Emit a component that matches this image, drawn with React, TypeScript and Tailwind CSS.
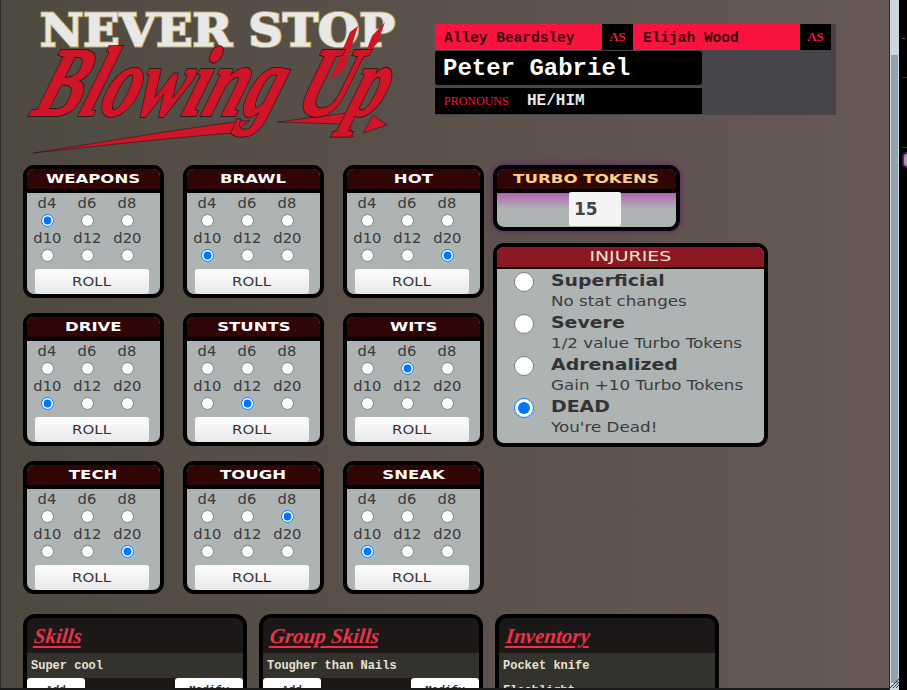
const wide = "font-['DejaVu_Sans',sans-serif]";
const typewriter = "font-['Liberation_Mono',monospace]";

const dice = ["d4", "d6", "d8", "d10", "d12", "d20"];

function DieCell({ label, name, checked }: { label: string; name: string; checked: boolean }) {
  return (
    <label className="flex flex-col items-center w-10 h-[35px]">
      <span className="text-[14px] leading-[17px] text-[#3a3a3a] font-medium scale-x-105">{label}</span>
      <input type="radio" name={name} defaultChecked={checked} className="w-[13px] h-[13px] m-0 mt-[2px]" />
    </label>
  );
}

function StatCard({ title, selected }: { title: string; selected: string }) {
  return (
    <div className="w-[141px] h-[133px] border-4 border-black rounded-[11px] overflow-hidden bg-[#aeb4b4] flex flex-col">
      <div className="h-6 shrink-0 bg-[#2f0506] border-b-4 border-black text-center text-white text-[13px] leading-[19px] font-bold">
        <span className="inline-block scale-x-[1.27]">{title}</span>
      </div>
      <div className="grid grid-cols-3 w-[120px] pt-[2px]">
        {dice.map((d) => (
          <DieCell key={d} label={d} name={title} checked={d === selected} />
        ))}
      </div>
      <button className="mt-[4px] ml-2 w-[114px] h-[25px] rounded-[3px] bg-gradient-to-b from-white to-[#e8e8e8] text-[#333] text-[12px] font-normal">
        <span className="inline-block scale-x-[1.25]">ROLL</span>
      </button>
    </div>
  );
}

function Injury({ title, note, checked }: { title: string; note: string; checked?: boolean }) {
  return (
    <div className="flex h-[42px]">
      <div className="w-[54px] flex justify-center items-start pt-[1px]">
        <input type="radio" name="injury" defaultChecked={checked} className="w-5 h-5 m-0" />
      </div>
      <div>
        <div className="text-[15px] leading-[20px] font-bold text-[#333] scale-x-[1.26] origin-left">{title}</div>
        <div className="text-[13.5px] leading-[21px] text-[#3c3c3c] scale-x-[1.24] origin-left">{note}</div>
      </div>
    </div>
  );
}

function ListPanel({ title, rows, withButtons }: { title: string; rows: string[]; withButtons?: boolean }) {
  return (
    <div className="w-[224px] h-[90px] shrink-0 border-4 border-b-0 border-black rounded-t-[12px] overflow-hidden bg-[#1c1818]">
      <div className="h-[35px] pl-[7px] pt-[4px]">
        <span className="inline-block -skew-x-6 text-[#e63347] text-[21px] leading-[28px] italic font-bold font-['Liberation_Serif',serif] underline decoration-2 underline-offset-3">{title}</span>
      </div>
      <div className={`${typewriter} text-[#e8e2d4] text-[12px] font-bold`}>
        <div className="h-[25px] bg-[#33322d] px-[4px] leading-[27px]">{rows[0]}</div>
        {withButtons ? (
          <div className="flex justify-between">
            <button className="w-[58px] h-6 bg-white rounded-t-[3px] text-[#333] text-[11px]">Add</button>
            <button className="w-[68px] h-6 bg-white rounded-t-[3px] text-[#333] text-[11px]">Modify</button>
          </div>
        ) : (
          <div className="bg-[#33322d] px-[4px] leading-[27px]">{rows[1]}</div>
        )}
      </div>
    </div>
  );
}

function Logo() {
  return (
    <svg width="400" height="160" viewBox="0 0 400 160" className="block overflow-visible">
      <text x="40" y="45.5" fontFamily="'DejaVu Serif', serif" fontWeight="700" fontSize="45" fill="#e6e6e6" stroke="#b59f55" strokeWidth="3" textLength="355" lengthAdjust="spacingAndGlyphs">NEVER STOP</text>
      <text x="40" y="45.5" fontFamily="'DejaVu Serif', serif" fontWeight="700" fontSize="45" fill="#e8e8e8" stroke="#e8e8e8" strokeWidth="1.2" textLength="355" lengthAdjust="spacingAndGlyphs">NEVER STOP</text>
      <path d="M33 153 C100 143 170 130 250 120 L233 133 C170 138 107 145 33 153Z" fill="#cf1528" stroke="#1a1010" strokeWidth="0.5" />
      <path d="M277 122 L347 113 L353 137 L344 128 L340 124Z M373 115 L387 125 L363 133Z" fill="#cf1528" stroke="#1a1010" strokeWidth="0.5" />
      <path d="M330 80 L350 32 L358 26 L344 70Z M362 62 L372 36 L385 22 L378 42Z" fill="#cf1528" />
      <g transform="translate(30 115) skewX(-20)">
        <text x="0" y="0" fontFamily="'Liberation Serif', serif" fontStyle="italic" fontWeight="700" fontSize="98" fill="#cf1528" stroke="#1a1010" strokeWidth="3.5" textLength="350" lengthAdjust="spacingAndGlyphs">Blowing Up</text>
        <text x="0" y="0" fontFamily="'Liberation Serif', serif" fontStyle="italic" fontWeight="700" fontSize="98" fill="#cf1528" stroke="#cf1528" strokeWidth="2" textLength="350" lengthAdjust="spacingAndGlyphs">Blowing Up</text>
      </g>
    </svg>
  );
}

function Scrollbar() {
  return (
    <div className="w-[18px] shrink-0 flex bg-black relative">
      <div className="w-[1px] bg-[#2a2a2a]" />
      <div className="w-[9px] h-full bg-[#cdd6dc] pt-[55px] px-[1px] relative">
        <div className="h-[628px] bg-[#90a4ae]" />
        <svg width="9" height="9" className="absolute right-0 bottom-[2px]" viewBox="0 0 9 9">
          <path d="M0 9L9 0M3 9L9 3M6 9L9 6" stroke="#333" strokeWidth="1" />
        </svg>
      </div>
      <div className="absolute left-[13px] top-[38px] w-[3px] h-[1px] bg-[#666]" />
      <div className="absolute left-[13px] top-[77px] w-[5px] h-[1px] bg-[#333]" />
      <div className="absolute left-[13px] top-[147px] w-[5px] h-[1px] bg-[#333]" />
      <div className="absolute left-[13px] top-[152px] w-[5px] h-[16px] rounded-l-full bg-[#999] border-2 border-r-0 border-[#5a1a70]" />
    </div>
  );
}

export default function App() {
  return (
    <div className={`w-[907px] h-[690px] flex overflow-hidden bg-[#1a1a1a] ${wide}`}>
      <div className="w-[889px] h-[688px] overflow-hidden bg-gradient-to-r from-[#4e4a40] to-[#675856] border-l border-[#2c2c2c]">
        <div className="flex h-[165px]">
          <div className="w-[435px] -ml-px">
            <Logo />
          </div>
          <div className="mt-6 w-[401px] h-[91px] bg-[#47444a]">
            <div className="flex h-[26px] w-[396px]">
              <div className={`w-[167px] bg-[#f8143f] pl-[9px] leading-[28px] text-[14.5px] font-bold text-[#3a0a10] ${typewriter}`}>Alley Beardsley</div>
              <div className="w-[31px] bg-black text-[#f8143f] text-[13px] leading-[26px] font-bold text-center font-['Liberation_Serif',serif]">AS</div>
              <div className={`w-[167px] bg-[#f8143f] pl-[10px] leading-[28px] text-[14.5px] font-bold text-[#3a0a10] ${typewriter}`}>Elijah Wood</div>
              <div className="w-[31px] bg-black text-[#f8143f] text-[13px] leading-[26px] font-bold text-center font-['Liberation_Serif',serif]">AS</div>
            </div>
            <div className={`mt-[1px] w-[267px] h-[34px] bg-black rounded-[3px] pl-[8px] text-white text-[24px] leading-[36px] font-bold ${typewriter}`}>Peter Gabriel</div>
            <div className="mt-[3px] w-[267px] h-[26px] bg-black flex items-center">
              <span className="ml-[9px] w-[83px] text-[#f8143f] text-[12px] font-['Liberation_Serif',serif]">PRONOUNS</span>
              <span className={`text-[#e8e8e8] text-[16px] font-bold ${typewriter}`}>HE/HIM</span>
            </div>
          </div>
        </div>

        <div className="flex pl-[22px] gap-[9px]">
          <div className="grid grid-cols-[141px_141px_141px] gap-x-[19px] gap-y-[15px]">
            <StatCard title="WEAPONS" selected="d4" />
            <StatCard title="BRAWL" selected="d10" />
            <StatCard title="HOT" selected="d20" />
            <StatCard title="DRIVE" selected="d10" />
            <StatCard title="STUNTS" selected="d12" />
            <StatCard title="WITS" selected="d6" />
            <StatCard title="TECH" selected="d20" />
            <StatCard title="TOUGH" selected="d8" />
            <StatCard title="SNEAK" selected="d10" />
          </div>
          <div className="flex flex-col gap-3 items-start">
            <div className="w-[187px] h-[66px] border-4 border-black rounded-[11px] overflow-hidden shadow-[0_0_6px_#5a1a70] bg-gradient-to-b from-[#b060b0] from-[24px] to-[#aeb4b4] to-[40px]">
              <div className="h-6 bg-[#2f0506] border-b-4 border-black text-center text-[#fdd283] text-[13px] leading-[19px] font-bold">
                <span className="inline-block scale-x-[1.28]">TURBO TOKENS</span>
              </div>
              <input defaultValue="15" className="block ml-[72px] -mt-px w-[52px] h-[34px] bg-[#f4f4f4] rounded-[2px] pl-[5px] text-[17px] font-bold text-[#444] outline-none" />
            </div>
            <div className="w-[275px] h-[204px] border-4 border-black rounded-[11px] overflow-hidden bg-[#aeb4b4]">
              <div className="h-[22px] bg-[#8b1823] border-b-2 border-black text-center text-[#f0e4d0] text-[14px] leading-[19px] font-medium">
                <span className="inline-block scale-x-[1.35]">INJURIES</span>
              </div>
              <div className="pt-[2px]">
                <Injury title="Superficial" note="No stat changes" />
                <Injury title="Severe" note="1/2 value Turbo Tokens" />
                <Injury title="Adrenalized" note="Gain +10 Turbo Tokens" />
                <Injury title="DEAD" note="You're Dead!" checked />
              </div>
            </div>
          </div>
        </div>

        <div className="flex pl-[22px] gap-3 mt-5">
          <ListPanel title="Skills" rows={["Super cool"]} withButtons />
          <ListPanel title="Group Skills" rows={["Tougher than Nails"]} withButtons />
          <ListPanel title="Inventory" rows={["Pocket knife", "Flashlight"]} />
        </div>
      </div>
      <Scrollbar />
    </div>
  );
}
